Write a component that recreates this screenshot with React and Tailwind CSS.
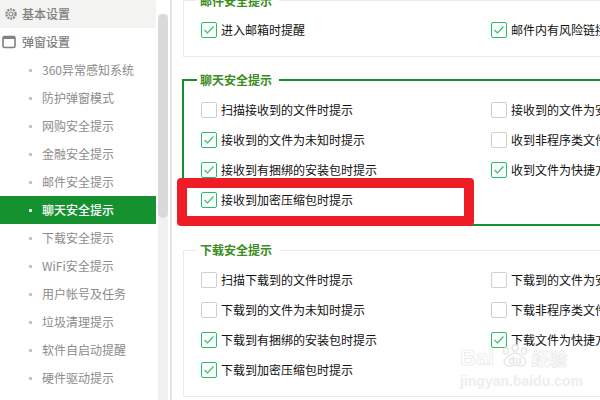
const font = { fontFamily: '"Noto Sans CJK SC", "Noto Sans", sans-serif' };

const navItems = [
  '360异常感知系统',
  '防护弹窗模式',
  '网购安全提示',
  '金融安全提示',
  '邮件安全提示',
  '聊天安全提示',
  '下载安全提示',
  'WiFi安全提示',
  '用户帐号及任务',
  '垃圾清理提示',
  '软件自启动提醒',
  '硬件驱动提示',
];

const chatRows = [
  [['扫描接收到的文件时提示', false], ['接收到的文件为安全时提示', false]],
  [['接收到的文件为未知时提示', true], ['收到非程序类文件时提示', false]],
  [['接收到有捆绑的安装包时提示', true], ['收到文件为快捷方式时提示', true]],
];

const downloadRows = [
  [['扫描下载到的文件时提示', false], ['下载到的文件为安全时提示', false]],
  [['下载到的文件为未知时提示', false], ['下载非程序类文件时提示', false]],
  [['下载到有捆绑的安装包时提示', true], ['下载文件为快捷方式时提示', true]],
  [['下载到加密压缩包时提示', true]],
];

const Check = ({ label, checked }) => (
  <div className="flex items-center gap-[4px] whitespace-nowrap text-[12px] leading-[16px] text-[#111]">
    <span
      className={`flex h-[16px] w-[16px] flex-shrink-0 items-center justify-center rounded-[2px] border bg-white ${
        checked ? 'border-[#1fc26b]' : 'border-[#cfcfcf]'
      }`}
    >
      {checked && (
        <svg width="12" height="10" viewBox="0 0 12 10" fill="none">
          <path d="M1.5 5l3 3 6-6.5" stroke="#2cc36b" strokeWidth="1.2" />
        </svg>
      )}
    </span>
    <span>{label}</span>
  </div>
);

const Rows = ({ rows }) =>
  rows.map((row, i) => (
    <div key={i} className="grid h-[30px] grid-cols-[290px_1fr] items-center">
      {row.map(([label, checked]) => (
        <Check key={label} label={label} checked={checked} />
      ))}
    </div>
  ));

const Title = ({ children }) => (
  <div className="ml-[13px] h-[16px] w-[82px] bg-white pl-[3px] text-[12px] font-bold leading-[16px] text-[#3c8c1e]">
    {children}
  </div>
);

export default function App() {
  return (
    <div className="relative flex h-[400px] w-[600px] overflow-hidden bg-white" style={font}>
      {/* 左侧菜单 */}
      <aside className="w-[156px] flex-shrink-0">
        <div className="flex h-[28px] items-center gap-[4px] bg-[#f3f3f1] pl-[4px] text-[12px] font-medium text-[#808080]">
          <svg width="14" height="14" viewBox="0 0 14 14" fill="none" stroke="#8a8a8a">
            <circle cx="7" cy="7" r="4.6" strokeWidth="2.2" strokeDasharray="2 0.9" />
            <circle cx="7" cy="7" r="2" strokeWidth="1.2" />
          </svg>
          <span>基本设置</span>
        </div>
        <div className="flex h-[28px] items-center gap-[6px] pl-[2px] text-[12px] font-medium text-[#808080]">
          <svg width="14" height="14" viewBox="0 0 14 14" fill="none">
            <rect x="1" y="1.5" width="12" height="11" rx="1.5" stroke="#808080" strokeWidth="1.6" />
            <rect x="1" y="1.5" width="12" height="2.5" fill="#808080" />
          </svg>
          <span>弹窗设置</span>
        </div>
        {navItems.map((item) => {
          const active = item === '聊天安全提示';
          return (
            <div
              key={item}
              className={`flex h-[28px] items-center whitespace-nowrap pl-[29px] text-[12px] ${
                active ? 'bg-[#169130] font-medium text-white' : 'text-[#8c8c8c]'
              }`}
            >
              <span className={`mr-[10px] h-[3px] w-[3px] ${active ? 'bg-[#d8e8da]' : 'bg-[#c4c4c4]'}`} />
              {item}
            </div>
          );
        })}
      </aside>

      {/* 滚动条 */}
      <div className="ml-[2px] mt-[14px] w-[10px] flex-shrink-0 bg-[#f1f1f1]">
        <div className="h-[204px] rounded-[5px] bg-[#d9d9d9]" />
      </div>

      {/* 右侧内容 */}
      <main className="ml-[2px] w-[2px] flex-1 border-l-2 border-[#e4e4e4] pl-[10px]">
        <div className="w-[500px]">
          <section className="ml-[1px] h-[57px] border border-[#ebebe8] pl-[17px]">
            <div className="-ml-[17px] -mt-[8px]">
              <Title>邮件安全提示</Title>
            </div>
            <div className="pt-[6px]">
              <Rows rows={[[['进入邮箱时提醒', true], ['邮件内有风险链接时提示', true]]]} />
            </div>
          </section>

          <section className="relative mt-[22px] h-[147px] border-2 border-[#169130] pl-[17px]">
            <div className="-ml-[17px] -mt-[9px]">
              <Title>聊天安全提示</Title>
            </div>
            <div className="pt-[7px]">
              <Rows rows={chatRows} />
              <div className="grid h-[30px] items-center">
                <Check label="接收到加密压缩包时提示" checked />
              </div>
            </div>
            {/* 红框标注 */}
            <div className="absolute left-[-7px] top-[97px] h-[48px] w-[297px] rounded-[4px] border-[10px] border-[#ee1c25]" />
          </section>

          <section className="ml-[1px] mt-[24px] h-[147px] border border-[#ebebe8] pl-[17px]">
            <div className="-ml-[17px] -mt-[9px]">
              <Title>下载安全提示</Title>
            </div>
            <div className="pt-[7px]">
              <Rows rows={downloadRows} />
            </div>
          </section>
        </div>
      </main>

      {/* 水印 */}
      <div className="pointer-events-none absolute left-[460px] top-[344px] w-[108px] text-transparent">
        <div className="flex h-[26px] items-end">
          <span className="text-[22px] font-bold leading-[24px] [-webkit-text-stroke:0.7px_#e8e8e8]" style={{ fontFamily: '"Liberation Sans", sans-serif' }}>
            Bai
          </span>
          <svg width="32" height="26" viewBox="0 0 32 26" fill="none" stroke="#e8e8e8" strokeWidth="1.5" className="ml-[5px] flex-shrink-0">
            <ellipse cx="16" cy="4" rx="3" ry="3.2" />
            <ellipse cx="7" cy="7" rx="2.5" ry="3" />
            <ellipse cx="25" cy="7" rx="2.5" ry="3" />
            <path d="M10 22c-5 0-6-5-3-8 3-2 5-5 9-5s6 3 9 5c3 3 2 8-3 8-2 0-4-1-6-1s-4 1-6 1z" />
            <text x="16" y="20" textAnchor="middle" fontSize="11" fontWeight="700" fill="#e8e8e8" stroke="none" fontFamily="Liberation Sans, sans-serif">du</text>
          </svg>
          <span className="flex-shrink-0 text-[18px] font-bold leading-[24px] [-webkit-text-stroke:0.7px_#e8e8e8]">经验</span>
        </div>
        <div className="mt-[4px] whitespace-nowrap text-[14px] font-bold leading-[14px] text-[#eeeeee]" style={{ fontFamily: '"Liberation Sans", sans-serif' }}>
          jingyan.baidu.com
        </div>
      </div>
    </div>
  );
}
